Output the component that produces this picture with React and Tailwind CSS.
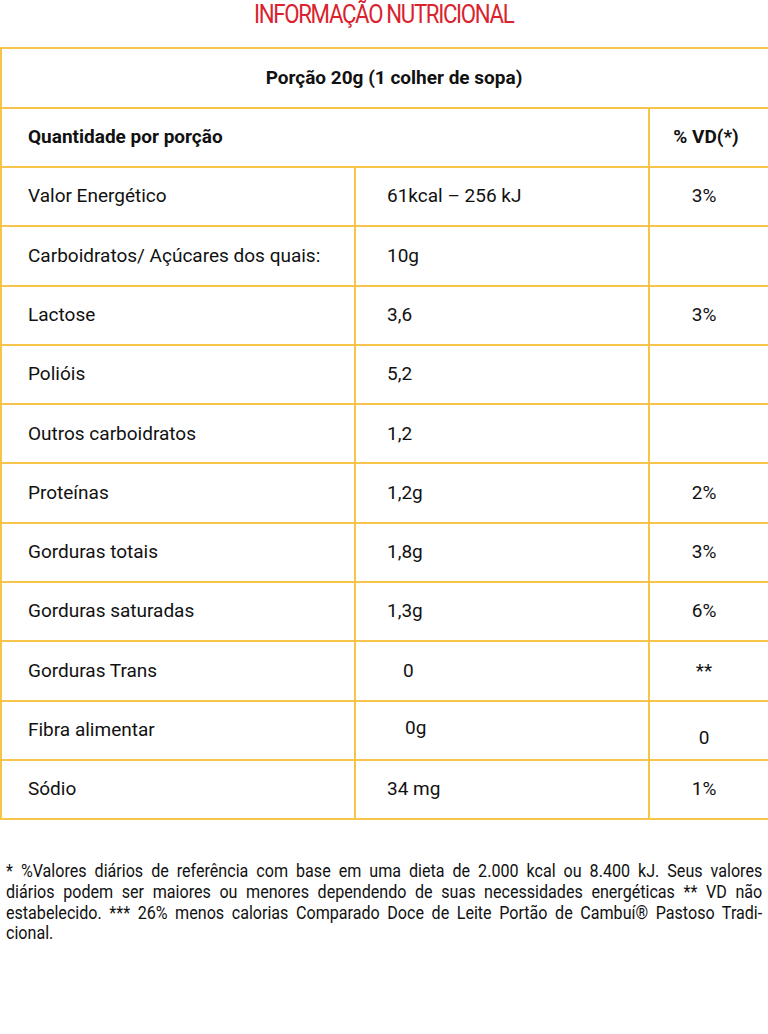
const rows = [
  { name: "Valor Energético", qty: "61kcal – 256 kJ", vd: "3%" },
  { name: "Carboidratos/ Açúcares dos quais:", qty: "10g", vd: "" },
  { name: "Lactose", qty: "3,6", vd: "3%" },
  { name: "Polióis", qty: "5,2", vd: "" },
  { name: "Outros carboidratos", qty: "1,2", vd: "" },
  { name: "Proteínas", qty: "1,2g", vd: "2%" },
  { name: "Gorduras totais", qty: "1,8g", vd: "3%" },
  { name: "Gorduras saturadas", qty: "1,3g", vd: "6%" },
  { name: "Gorduras Trans", qty: "0", vd: "**", qtyClass: "pl-[47px]" },
  { name: "Fibra alimentar", qty: "0g", vd: "0", qtyClass: "pl-[49px] pb-[4px]", vdClass: "pt-[16px]" },
  { name: "Sódio", qty: "34 mg", vd: "1%" },
];

const note = [
  "* %Valores diários de referência com base em uma dieta de 2.000 kcal ou 8.400 kJ. Seus valores",
  "diários podem ser maiores ou menores dependendo de suas necessidades energéticas ** VD não",
  "estabelecido. *** 26% menos calorias Comparado Doce de Leite Portão de Cambuí® Pastoso Tradi-",
];

export default function App() {
  return (
    <div className="min-h-screen overflow-hidden bg-white text-[#111] font-['Roboto',sans-serif]">
      {/* Title */}
      <div className="h-[47px] text-center">
        <h1 className="inline-block scale-x-[0.89] pt-[1px] text-[25px] leading-[28px] tracking-[-1.5px] text-[#d9232e]">
          INFORMAÇÃO NUTRICIONAL
        </h1>
      </div>

      {/* Table */}
      <table className="w-[768px] border-collapse table-fixed text-[19px]">
        <colgroup>
          <col className="w-[354px]" />
          <col className="w-[294px]" />
          <col className="w-[120px]" />
        </colgroup>
        <tbody>
          <tr className="h-[60px]">
            <td colSpan={3} className="border-2 border-[#f7c44a] pl-[18px] text-center font-bold">
              Porção 20g (1 colher de sopa)
            </td>
          </tr>
          <tr className="h-[59px]">
            <td colSpan={2} className="border-2 border-[#f7c44a] pl-[26px] font-bold">
              Quantidade por porção
            </td>
            <td className="border-2 border-[#f7c44a] pr-[6px] text-center font-bold">% VD(*)</td>
          </tr>
          {rows.map((r) => (
            <tr key={r.name} className="h-[59.3px]">
              <td className="border-2 border-[#f7c44a] pl-[26px]">{r.name}</td>
              <td className={`border-2 border-[#f7c44a] ${r.qtyClass || "pl-[31px]"}`}>{r.qty}</td>
              <td className={`border-2 border-[#f7c44a] pr-[10px] text-center ${r.vdClass || ""}`}>{r.vd}</td>
            </tr>
          ))}
        </tbody>
      </table>

      {/* Footnote (condensed type) */}
      <div className="mt-[41px] ml-[6px] w-[822px] origin-left scale-x-[0.92] text-[17.5px] leading-[20.7px] text-[#111]">
        {note.map((l) => (
          <p key={l} className="whitespace-nowrap text-justify [text-align-last:justify]">
            {l}
          </p>
        ))}
        <p>cional.</p>
      </div>
    </div>
  );
}
